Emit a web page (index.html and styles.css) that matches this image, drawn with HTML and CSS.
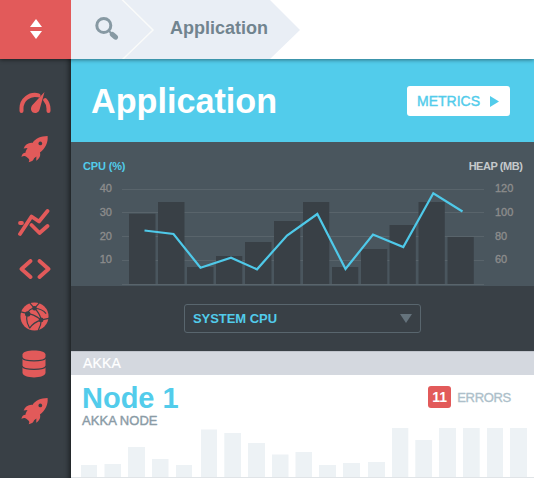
FILE: index.html
```
<!DOCTYPE html>
<html lang="en">
<head>
<meta charset="utf-8">
<title>Application</title>
<link rel="stylesheet" href="styles.css">
</head>
<body>
<svg class="defs" aria-hidden="true">
  <symbol id="rocket" viewBox="0 0 30 30">
    <path d="M28.500 1C21 1.200 15.500 3.500 12.300 8.500C8 8 4.500 10.500 2.800 14.500L7 14C5.800 16 5 17.500 4.800 19C2.500 19 1 20.500 .500 23.500C3 22 5 22.500 7 24.500C9 26 9.500 27 8.200 29.300C12 28.500 13.500 27 14 25L16.500 23L16.300 27.500C19.800 25.500 21.300 22 20.300 18.700C26 14.500 29.300 8 28.500 1Z"/>
    <circle class="hole" cx="20.700" cy="9" r="2"/>
  </symbol>
</svg>
<div class="app">
  <header class="top">
    <div class="switch">
      <svg width="12" height="20" viewBox="0 0 12 20"><path d="M6 0L12 8H0ZM0 12H12L6 20Z"/></svg>
    </div>
    <nav class="crumbs">
      <svg class="crumb-shape" width="229" height="59" viewBox="0 0 229 59">
        <path class="crumb-fill" d="M0 0H199L229 30L199 59H0Z"/>
        <path class="crumb-line" d="M50.500 -1L82 30L51 60"/>
      </svg>
      <svg class="search" width="25" height="25" viewBox="0 0 25 25"><circle cx="9.800" cy="9.500" r="7"/><path class="neck" d="M14.500 14.500L17 17"/><path class="handle" d="M18.300 18.300L21.500 21.200"/></svg>
      <span class="crumb">Application</span>
    </nav>
  </header>
  <div class="body">
    <aside class="side">
      <svg class="icon gauge" viewBox="0 0 32 22"><path class="arc" d="M2.500 19V17A13.500 13.500 0 0 1 19.500 3.400M26.200 8A13.500 13.500 0 0 1 29.500 17V19"/><path d="M25.500 0L13 13.500C10.500 17.500 13 21 16 21C19.500 21 20.500 18.500 21 16Z"/></svg>
      <svg class="icon rocket"><use href="#rocket"/></svg>
      <svg class="icon trend" viewBox="0 0 32 28"><path d="M2 25L13.500 7.500L21 12.500L29.500 2M2 14H4M13.500 16L21.500 24L29.500 17"/></svg>
      <svg class="icon code" viewBox="0 0 32 20"><path d="M11.500 2L2.500 10L11.500 18M20.500 2L29.500 10L20.500 18"/></svg>
      <svg class="icon globe" viewBox="0 0 30 30"><circle cx="15" cy="15" r="14.500"/><path class="cut" d="M8 12Q9 7 15 6.500Q23 7 27 12M15 6.500Q20 11 22 18.500M8 12Q13 12 22 18.500M8 12Q5 19 10 27M22 18.500Q14 21 10 27M22 18.500L30 17M22 18.500Q22 23 19 29M15 6.500L10 1M8 12L0 10M15 6.500L20 1"/><g class="dots"><circle cx="15" cy="6.500" r="2.400"/><circle cx="8" cy="12.300" r="2.800"/><circle cx="21.800" cy="18.500" r="2.500"/></g></svg>
      <svg class="icon data" viewBox="0 0 24 28"><path d="M.500 4.500C.500 -1 23.500 -1 23.500 4.500V22.500C23.500 29 .500 29 .500 22.500Z"/><path class="cut" d="M0 7.500C1 12 23 12 24 7.500M0 16C1 20.500 23 20.500 24 16"/></svg>
      <svg class="icon rocket"><use href="#rocket"/></svg>
    </aside>
    <main class="main">
      <section class="hero">
        <h1>Application</h1>
        <a class="metrics"><span>METRICS</span><svg width="9" height="11" viewBox="0 0 9 11"><path d="M0 0L9 5.500L0 11Z"/></svg></a>
      </section>
      <section class="chart">
        <div class="legend"><span class="cpu">CPU (%)</span><span class="heap">HEAP (MB)</span></div>
        <div class="plot">
          <div class="axis left"><span>40</span><span>30</span><span>20</span><span>10</span></div>
          <svg class="graph" width="362" height="104" viewBox="122 182 362 104">
            <path class="grid" d="M122 189.500H484M122 212.500H484M122 236.500H484M122 260.500H484M122 284.500H484"/>
            <path class="bars" d="M129 213.700h26.500V284h-26.500zM158 202h26.500V284H158zM187 267h26.500V284H187zM216 256h26.300V284H216zM245 242h26.500V284H245zM274 221h26.300V284H274zM303 202h26.300V284H303zM332 267h26.300V284H332zM361 249h26.300V284H361zM389.500 225h26.300V284h-26.300zM418.500 202h26.300V284h-26.300zM447.500 237h26.300V284h-26.300z"/>
            <polyline class="line" points="144.500,230.500 173.500,234 200.500,267.700 231,257.700 257,269.300 287,235.500 317.300,214 345.500,269 373,234.500 403.300,247 433.300,193.300 462.500,211.500"/>
          </svg>
          <div class="axis right"><span>120</span><span>100</span><span>80</span><span>60</span></div>
        </div>
      </section>
      <section class="filter">
        <div class="select"><span>SYSTEM CPU</span><svg width="12" height="9" viewBox="0 0 12 9"><path d="M0 0H12L6 9Z"/></svg></div>
      </section>
      <div class="group">AKKA</div>
      <section class="node">
        <div class="node-head">
          <div><h2>Node 1</h2><p>AKKA NODE</p></div>
          <div class="errors"><b>11</b><span>ERRORS</span></div>
        </div>
        <svg class="spark" width="463" height="50" viewBox="71 428 463 50">
          <path d="M81 465h16v13H81zM104.500 464H121v14h-16.500zM128 447h17v31h-17zM152 459h16.500v19H152zM176 465h16v13h-16zM201 429.500h16V478h-16zM224.300 433H241v45h-16.700zM248 443h17v35h-17zM272 454.500h16.500V478H272zM295.500 452H312v26h-16.500zM319 465h17v13h-17zM343 463h17v15h-17zM368 462h17v16h-17zM392 428h16.300v50H392zM415.300 440H432v38h-16.700zM439 428h17v50h-17zM463 428h16.700v50H463zM487 428h16v50h-16zM510 428h17v50h-17z"/>
          <path class="base" d="M71 477.500H534"/>
        </svg>
      </section>
    </main>
  </div>
</div>
</body>
</html>
```
FILE: styles.css
```
* { box-sizing: border-box; }
body { margin: 0; font-family: "Liberation Sans", Arial, sans-serif; background: #fff; }
h1, h2, p { margin: 0; }
svg { display: block; flex: none; }
.defs { display: none; }
.app { width: 534px; height: 478px; display: flex; flex-direction: column; overflow: hidden; }
.top { display: flex; height: 59px; flex: none; background: #fff; position: relative; z-index: 2; box-shadow: 0 1px 4px rgba(0,0,0,.45); }
.switch { width: 71px; background: #e25a5a; display: flex; justify-content: center; padding-top: 19px; }
.switch path { fill: #fff; }
.crumbs { flex: 1; display: flex; align-items: flex-start; position: relative; }
.crumb-shape { position: absolute; left: 0; top: 0; }
.crumb-fill { fill: #e9eef5; }
.crumb-line { fill: none; stroke: #fafbfa; stroke-width: 1.500px; }
.search { position: relative; margin: 16px 0 0 23px; fill: none; stroke: #8799a3; }
.search circle { stroke-width: 3px; }
.search .neck { stroke-width: 2px; }
.search .handle { stroke-width: 5px; stroke-linecap: round; }
.crumb { position: relative; margin: 17px 0 0 51px; font: bold 18px/22px "Liberation Sans", sans-serif; color: #71848f; }
.body { flex: 1; display: flex; }
.side { width: 71px; flex: none; background: #394046; box-shadow: inset -5px 0 5px -3px rgba(0,0,0,.5); display: flex; flex-direction: column; align-items: center; padding: 33px 2px 0 0; }
.icon { fill: #e25a5a; }
.gauge { width: 32px; height: 22px; }
.arc { fill: none; stroke: #e25a5a; stroke-width: 4px; stroke-linecap: round; }
.rocket { width: 28px; height: 28px; margin-top: 21px; }
.hole { fill: #394046; }
.trend { width: 32px; height: 28px; margin-top: 46px; margin-right: 2px; }
.code { width: 32px; height: 20px; margin-top: 22px; }
.trend path, .code path { fill: none; stroke: #e25a5a; stroke-width: 3.800px; stroke-linecap: round; stroke-linejoin: round; }
.globe { width: 29px; height: 29px; margin-top: 23px; }
.data { width: 24px; height: 28px; margin-top: 19px; margin-right: 1px; }
.data + .rocket { margin-top: 19px; }
.cut { fill: none; stroke: #394046; stroke-width: 1.200px; }
.dots { fill: #394046; }
.main { flex: 1; display: flex; flex-direction: column; min-width: 0; }
.hero { height: 83px; background: #52cceb; display: flex; justify-content: space-between; padding: 22px 24px 0 20px; }
h1 { color: #fff; font-size: 34.200px; line-height: 40px; }
.metrics { width: 103px; height: 30px; margin-top: 5px; border-radius: 3px; background: #fff; color: #52cceb; display: flex; align-items: center; padding-left: 10px; gap: 10px; font-size: 14px; -webkit-text-stroke: .4px #52cceb; }
.metrics path { fill: #52cceb; }
.chart { height: 144px; background: #4a565e; padding-top: 17px; }
.legend { display: flex; justify-content: space-between; padding: 0 12px; font: bold 11px/14px "Liberation Sans", sans-serif; color: #c5c9cb; }
.cpu { color: #52cceb; letter-spacing: -.15px; }
.heap { letter-spacing: -.45px; margin-right: -.45px; }
.plot { display: flex; margin-top: 9px; }
.axis { display: flex; flex-direction: column; font-size: 11px; line-height: 23.800px; color: #8c8c8c; -webkit-text-stroke: .35px #8c8c8c; margin-top: -5px; }
.left { width: 51px; padding-right: 10px; text-align: right; }
.right { padding-left: 11px; }
.grid { stroke: #59646b; stroke-width: 1px; }
.bars { fill: #394046; }
.line { fill: none; stroke: #4fc9e9; stroke-width: 2.200px; }
.filter { height: 65px; background: #394046; padding: 18px 0 0 113px; }
.select { width: 237px; height: 29px; border: 1px solid #59666e; border-radius: 3px; display: flex; align-items: center; justify-content: space-between; padding: 0 8px; font: bold 13px "Liberation Sans", sans-serif; letter-spacing: -.05px; color: #52cceb; }
.select path { fill: #65737c; }
.group { height: 24px; flex: none; background: #d4d8df; border-top: 1px solid #c0c4cc; color: #fff; padding-left: 12px; font-size: 14px; line-height: 22px; letter-spacing: .2px; -webkit-text-stroke: .2px #fff; }
.node { height: 103px; display: flex; flex-direction: column; justify-content: space-between; }
.node-head { display: flex; justify-content: space-between; padding: 7px 23px 0 11px; }
h2 { font-size: 29px; line-height: 32px; color: #52cceb; }
.node p { font-size: 13px; line-height: 13px; letter-spacing: .05px; color: #8a9ba6; -webkit-text-stroke: .4px #8a9ba6; }
.errors { display: flex; align-items: center; height: 22px; margin-top: 4px; gap: 6px; font-size: 13px; letter-spacing: -.3px; color: #adbfca; -webkit-text-stroke: .35px #adbfca; }
.errors b { width: 23px; height: 22px; border-radius: 3px; background: #e25a5a; color: #fff; text-align: center; font-size: 14px; line-height: 22px; letter-spacing: 0; -webkit-text-stroke: 0; }
.spark { fill: #edf2f5; }
.base { stroke: #e0e4e7; }
```
